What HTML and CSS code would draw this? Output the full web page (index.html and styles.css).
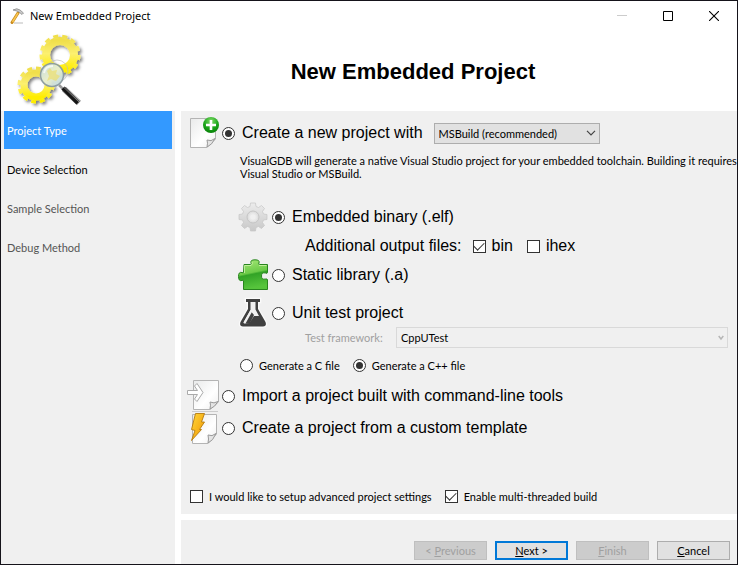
FILE: index.html
```
<!DOCTYPE html>
<html lang="en">
<head>
    <meta charset="UTF-8">
    <meta name="viewport" content="width=device-width, initial-scale=1.0">
    <title>New Embedded Project</title>
    <link rel="stylesheet" href="styles.css">
</head>
<body>
    <div class="window">
        <header class="titlebar">
            <svg class="app-icon" width="16" height="16" viewBox="0 0 16 16">
                <path d="M5 15 L14 15" stroke="#ddd" stroke-width="2"/>
                <path d="M9 5 L3 14.500" stroke="#c98a1c" stroke-width="3" stroke-linecap="round"/>
                <path d="M9 5 L3.500 14" stroke="#f8c650" stroke-width="1.500"/>
                <path d="M4 2 Q8 -.5 11 2 L14.500 5 L13 6.500 L10 4 Q7 2.500 4 2Z" fill="#ccc" stroke="#808080" stroke-width=".7"/>
            </svg>
            <span class="caption">New Embedded Project</span>
            <button class="caption-button" aria-label="Minimize" disabled>
                <svg width="10" height="10"><path d="M0 4.500H10" stroke="#ccc"/></svg>
            </button>
            <button class="caption-button" aria-label="Maximize">
                <svg width="10" height="10"><path d="M.5 .5H9.500V9.500H.5Z" fill="none" stroke="#000"/></svg>
            </button>
            <button class="caption-button" aria-label="Close">
                <svg width="10" height="10"><path d="M0 0L10 10M10 0L0 10" stroke="#000" stroke-width="1.100"/></svg>
            </button>
        </header>

        <div class="banner">
            <svg class="banner-icon" width="74" height="76" viewBox="0 0 74 76">
                <defs>
                    <linearGradient id="yellow" x1="0" y1="0" x2="0" y2="1">
                        <stop offset="0" stop-color="#f0df4c"/>
                        <stop offset=".45" stop-color="#fcf070"/>
                        <stop offset="1" stop-color="#ffed00"/>
                    </linearGradient>
                    <linearGradient id="glass" x1="0" y1="0" x2="1" y2="1">
                        <stop offset="0" stop-color="#c3dce9"/>
                        <stop offset=".5" stop-color="#e9efcf"/>
                        <stop offset="1" stop-color="#b5d3e6"/>
                    </linearGradient>
                    <filter id="shadow" x="-20%" y="-20%" width="150%" height="150%">
                        <feDropShadow dx="2" dy="2" stdDeviation="1.500" flood-color="#000" flood-opacity=".5"/>
                    </filter>
                </defs>
                <g fill="none" stroke="url(#yellow)" filter="url(#shadow)">
                    <circle cx="45" cy="22" r="14" stroke-width="8"/>
                    <circle cx="45" cy="22" r="18.500" stroke-width="4" pathLength="26" stroke-dasharray="1.100 .9"/>
                    <circle cx="21" cy="52" r="12" stroke-width="7"/>
                    <circle cx="21" cy="52" r="16.500" stroke-width="4" pathLength="24" stroke-dasharray="1.100 .9"/>
                </g>
                <circle cx="42" cy="38" r="11" fill="none" stroke="#bbb" stroke-width="1" opacity=".7"/>
                <path d="M44 52L49 57" stroke="#999" stroke-width="2.500"/>
                <path d="M49 56L64 70" stroke="#aaa" stroke-width="6"/>
                <path d="M48 55L63 70" stroke="#151515" stroke-width="4.500"/>
                <path d="M49 54.500L64 69" stroke="#999" stroke-width=".8"/>
                <circle cx="37" cy="42" r="11.500" fill="url(#glass)" stroke="#8a9ba0" stroke-width="1.500" opacity=".96"/>
                <path d="M32 38L35 35L37 38L42 37L41 41L45 43L41 48L36 46L32 48L34 43Z" fill="#eadf76" opacity=".75"/>
                <path d="M29 40Q30 33 38 33" fill="none" stroke="#fff" stroke-width="2" opacity=".7"/>
            </svg>
            <h1>New Embedded Project</h1>
        </div>

        <div class="content">
            <nav class="steps">
                <a class="step current" href="#">Project Type</a>
                <a class="step ready" href="#">Device Selection</a>
                <a class="step" href="#">Sample Selection</a>
                <a class="step" href="#">Debug Method</a>
            </nav>

            <div class="pane">
                <main class="options">
                    <div class="row first">
                        <svg class="icon" viewBox="0 0 32 32">
                            <defs>
                                <linearGradient id="paper" x1="0" y1="0" x2="1" y2="1">
                                    <stop offset="0" stop-color="#e9eaea"/>
                                    <stop offset=".6" stop-color="#fff"/>
                                    <stop offset="1" stop-color="#eee"/>
                                </linearGradient>
                                <radialGradient id="plus" cx=".5" cy=".25" r=".75">
                                    <stop offset="0" stop-color="#7fdc67"/>
                                    <stop offset=".6" stop-color="#1ba51b"/>
                                    <stop offset="1" stop-color="#068006"/>
                                </radialGradient>
                            </defs>
                            <path d="M3.500 1.500H28.500V22L20 30.500H3.500Z" fill="url(#paper)" stroke="#b4b4b4"/>
                            <path d="M20 30Q21 26 20 23Q24 25 28 21.500Q25 28 20 30Z" fill="#e4e4e4" stroke="#999"/>
                            <circle cx="24" cy="8" r="8" fill="url(#plus)"/>
                            <path d="M24 3V13M19 8H29" stroke="#fff" stroke-width="2.600"/>
                        </svg>
                        <input type="radio" name="kind" id="create" checked>
                        <label for="create">Create a new project with</label>
                        <span class="select toolchain">
                            <select aria-label="Build system"><option>MSBuild (recommended)</option></select>
                            <svg width="10" height="6"><path d="M1 .8L5 4.800L9 .8" fill="none" stroke="#444" stroke-width="1.200"/></svg>
                        </span>
                    </div>
                    <p class="description">VisualGDB will generate a native Visual Studio project for your embedded toolchain. Building it requires Visual Studio or MSBuild.</p>

                    <div class="sub">
                        <div class="row">
                            <svg class="icon" viewBox="0 0 32 32">
                                <defs>
                                    <linearGradient id="silver" x1="0" y1="0" x2="0" y2="1">
                                        <stop offset="0" stop-color="#ececec"/>
                                        <stop offset="1" stop-color="#c8c8c8"/>
                                    </linearGradient>
                                </defs>
                                <path d="M13.500 2H18.500L19 5.500L21.500 6.500L24.500 4.500L27.500 7.500L25.500 10.500L26.500 13L30 13.500V18.500L26.500 19L25.500 21.500L27.500 24.500L24.500 27.500L21.500 25.500L19 26.500L18.500 30H13.500L13 26.500L10.500 25.500L7.500 27.500L4.500 24.500L6.500 21.500L5.500 19L2 18.500V13.500L5.500 13L6.500 10.500L4.500 7.500L7.500 4.500L10.500 6.500L13 5.500Z" fill="url(#silver)" stroke="#c6c6c6" stroke-width=".7" stroke-linejoin="round"/>
                                <circle cx="16" cy="16" r="6" fill="#e0e0e0" stroke="#c4c4c4"/>
                                <circle cx="16" cy="16" r="3.500" fill="#f0f0f0" stroke="#e8e8e8" stroke-width="1.500"/>
                            </svg>
                            <input type="radio" name="output" id="binary" checked>
                            <label for="binary">Embedded binary (.elf)</label>
                        </div>
                        <div class="row extra">
                            <span class="extra-label">Additional output files:</span>
                            <input type="checkbox" id="bin" checked>
                            <label for="bin">bin</label>
                            <input type="checkbox" id="ihex">
                            <label for="ihex">ihex</label>
                        </div>
                        <div class="row">
                            <svg class="icon" viewBox="0 0 32 32">
                                <defs>
                                    <linearGradient id="green" x1="0" y1="0" x2=".2" y2="1">
                                        <stop offset="0" stop-color="#a8e879"/>
                                        <stop offset=".5" stop-color="#6ccb48"/>
                                        <stop offset=".56" stop-color="#32a326"/>
                                        <stop offset="1" stop-color="#56c43c"/>
                                    </linearGradient>
                                </defs>
                                <path d="M7 5.500H13.500Q15 5.500 14 4Q13 .8 18 .8T22 4Q21 5.500 22.500 5.500H30.500V13Q30.500 15 28.500 14Q24.500 13 24.500 17T28.500 20Q30.500 19.500 30.500 21V30.500H6.500V22Q6.500 20.500 5 21.500Q1.500 22.500 1.500 17.500T5 13.500Q6.500 14.500 6.500 13Z" fill="url(#green)" stroke="#28851e"/>
                                <path d="M7.500 14V6.500H14Q16 5 15 3M22 6.500H29.500" fill="none" stroke="#cff5aa" stroke-width=".8"/>
                            </svg>
                            <input type="radio" name="output" id="library">
                            <label for="library">Static library (.a)</label>
                        </div>
                        <div class="row unit">
                            <svg class="icon" viewBox="0 0 32 32">
                                <path d="M9 2H23V5H21V12L28.500 25Q30 29.500 26 29.500H6Q2 29.500 3.500 25L11 12V5H9Z" fill="#404040" stroke="#fafafa" stroke-width="2.500" paint-order="stroke"/>
                                <path d="M13.500 5H18.500V12.500L22 19H17L12 26.500H7L6.500 25.500L13.500 13Z" fill="#f0f0f0"/>
                                <path d="M14 14.500L12.500 18L8 26.500L12.500 27L17 18Z" fill="#404040"/>
                                <path d="M13.500 13L6.500 25.500L8.500 26.500L15.500 14Z" fill="#f0f0f0"/>
                            </svg>
                            <input type="radio" name="output" id="unit">
                            <label for="unit">Unit test project</label>
                        </div>
                        <div class="framework">
                            <label for="framework">Test framework:</label>
                            <span class="select disabled">
                                <select id="framework" disabled><option>CppUTest</option></select>
                                <svg width="6" height="6"><path d="M.7 1L3 4L5.300 1" fill="none" stroke="#b5b5b5" stroke-width="1.400"/></svg>
                            </span>
                        </div>
                        <div class="small-row language">
                            <input type="radio" name="language" id="lang-c">
                            <label for="lang-c">Generate a C file</label>
                            <input type="radio" name="language" id="lang-cpp" checked>
                            <label for="lang-cpp">Generate a C++ file</label>
                        </div>
                    </div>

                    <div class="row top">
                        <svg class="icon" viewBox="0 0 32 32">
                            <path d="M5 31.500H31" stroke="#ccc"/>
                            <path d="M6.500 .5H31.500V22L23 29.500H6.500Z" fill="url(#paper)" stroke="#b4b4b4"/>
                            <path d="M23 29Q24 25 23 22Q27 24 31 21.500Q28 27 23 29Z" fill="#e4e4e4" stroke="#999"/>
                            <path d="M.5 10.500H10.500L7.500 6L10 3.500L16 12.500L10 21.500L7.500 19L10.500 14.500H.5Z" fill="#fff" stroke="#aaa"/>
                        </svg>
                        <input type="radio" name="kind" id="import">
                        <label for="import">Import a project built with command-line tools</label>
                    </div>
                    <div class="row top">
                        <svg class="icon" viewBox="0 0 32 32">
                            <defs>
                                <linearGradient id="bolt" x1="0" y1="0" x2="1" y2="1">
                                    <stop offset="0" stop-color="#ffd83a"/>
                                    <stop offset="1" stop-color="#f09400"/>
                                </linearGradient>
                            </defs>
                            <path d="M5.500 2.500H29.500V22L21 31.500H5.500Z" fill="url(#paper)" stroke="#b4b4b4"/>
                            <path d="M21 31Q22 27 21 23Q25 25 29 21.500Q26 29 21 31Z" fill="#e4e4e4" stroke="#999"/>
                            <path d="M8.500 1.500H17.500L14.500 10H17.500L12.500 17.500H14.500L4.500 28.500L8 18.500L4.500 17.500Z" fill="url(#bolt)" stroke="#b47a10" stroke-width=".9"/>
                        </svg>
                        <input type="radio" name="kind" id="template">
                        <label for="template">Create a project from a custom template</label>
                    </div>

                    <div class="small-row advanced">
                        <input type="checkbox" id="settings">
                        <label for="settings">I would like to setup advanced project settings</label>
                        <input type="checkbox" id="threaded" checked>
                        <label for="threaded">Enable multi-threaded build</label>
                    </div>
                </main>

                <footer class="buttons">
                    <button disabled>&lt; <u>P</u>revious</button>
                    <button class="default"><u>N</u>ext &gt;</button>
                    <button disabled><u>F</u>inish</button>
                    <button><u>C</u>ancel</button>
                </footer>
            </div>
        </div>
    </div>
</body>
</html>
```

FILE: styles.css
```
* {
    box-sizing: border-box;
}

body {
    margin: 0;
    font-family: Lato, sans-serif;
    font-size: 11px;
    line-height: 13px;
    color: #000;
}

button, select {
    font: inherit;
    color: inherit;
}

.window {
    display: flex;
    flex-direction: column;
    min-height: 100vh;
    border: 1px solid #15131a;
    background: #fff;
}

.titlebar {
    display: flex;
    align-items: center;
    height: 29px;
    padding-left: 8px;
}

.caption {
    flex: 1;
    margin-left: 5px;
    font-family: "Noto Sans", sans-serif;
}

.caption-button {
    display: flex;
    align-items: center;
    justify-content: center;
    width: 46px;
    height: 29px;
    padding: 0;
    border: 0;
    background: none;
}

.banner {
    display: flex;
    align-items: center;
    height: 81px;
    padding-left: 14px;
}

.banner h1 {
    flex: 1;
    margin: 0;
    padding-top: 2px;
    text-align: center;
    font-family: "Liberation Sans", Arial, sans-serif;
    font-size: 22px;
    line-height: 26px;
}

.content {
    flex: 1;
    display: flex;
    gap: 6px;
}

.steps {
    display: flex;
    flex-direction: column;
    gap: 1px;
    width: 174px;
    padding: 0 3px;
    background: #f0f0f0;
}

.step {
    height: 38px;
    padding: 0 3px;
    line-height: 40px;
    color: #555;
    text-decoration: none;
}

.step.ready {
    color: #000;
}

.step.current {
    background: #3399ff;
    color: #fff;
}

.pane {
    flex: 1;
    display: flex;
    flex-direction: column;
    gap: 6px;
}

.options {
    flex: 1;
    display: flex;
    flex-direction: column;
    padding: 1px 0 10px 6px;
    background: #f0f0f0;
}

.row {
    display: flex;
    align-items: center;
    font-family: "Liberation Sans", Arial, sans-serif;
    font-size: 16px;
    line-height: 20px;
}

.row.first {
    height: 42px;
}

.row.top {
    height: 32px;
}

.icon {
    width: 32px;
    height: 32px;
    margin-right: 3px;
}

.row label {
    margin-left: 7px;
}

input[type="radio"], input[type="checkbox"] {
    appearance: none;
    display: grid;
    place-items: center;
    width: 13px;
    height: 13px;
    margin: 0;
    border: 1px solid #333;
    background: #fff;
}

input[type="radio"] {
    border-radius: 50%;
}

input[type="radio"]:checked::after {
    content: "";
    width: 7px;
    height: 7px;
    border-radius: 50%;
    background: #333;
}

input[type="checkbox"]:checked::after {
    content: "";
    width: 9px;
    height: 5px;
    margin-bottom: 3px;
    border-left: 1px solid #333;
    border-bottom: 1px solid #333;
    transform: rotate(-45deg);
}

.select {
    display: grid;
    align-items: center;
    height: 21px;
    font-family: Lato, sans-serif;
    font-size: 11px;
}

.select select {
    appearance: none;
    grid-area: 1 / 1;
    width: 100%;
    height: 21px;
    padding: 0 4px;
    border: 1px solid #adadad;
    border-radius: 0;
    background: #e1e1e1;
}

.select svg {
    grid-area: 1 / 1;
    justify-self: end;
    margin-right: 4px;
    pointer-events: none;
}

.select.disabled select {
    border-color: #d9d9d9;
    background: #f0f0f0;
    color: #000;
    opacity: 1;
}

.toolchain {
    width: 166px;
    margin-left: 11px;
}

.description {
    margin: 0 0 22px;
    padding-left: 53px;
}

.sub {
    padding: 0 9px 0 50px;
}

.sub .row {
    height: 30px;
}

.sub .row.extra {
    height: 28px;
    padding-left: 68px;
}

.extra input {
    margin-left: 14px;
}

.extra .extra-label + input {
    margin-left: 11px;
}

.extra label {
    margin-left: 6px;
}

.sub .row.unit {
    height: 28px;
    margin-top: 9px;
}

.framework {
    display: flex;
    align-items: center;
    padding-left: 68px;
    color: #a0a0a0;
}

.framework label {
    width: 91px;
}

.framework .select {
    flex: 1;
}

.small-row {
    display: flex;
    align-items: center;
    height: 16px;
}

.small-row label {
    margin: 0 13px 0 6px;
}

.language {
    margin: 9px 0 7px 3px;
}

.advanced {
    margin-top: auto;
    padding-left: 3px;
}

.buttons {
    display: flex;
    justify-content: flex-end;
    gap: 8px;
    height: 44px;
    padding: 21px 7px 4px;
    background: #f0f0f0;
}

.buttons button {
    width: 73px;
    padding: 0;
    border: 1px solid #adadad;
    background: #e1e1e1;
}

.buttons button.default {
    border: 2px solid #0078d7;
}

.buttons button:disabled {
    border-color: #bfbfbf;
    background: #ccc;
    color: #a0a0a0;
}
```
